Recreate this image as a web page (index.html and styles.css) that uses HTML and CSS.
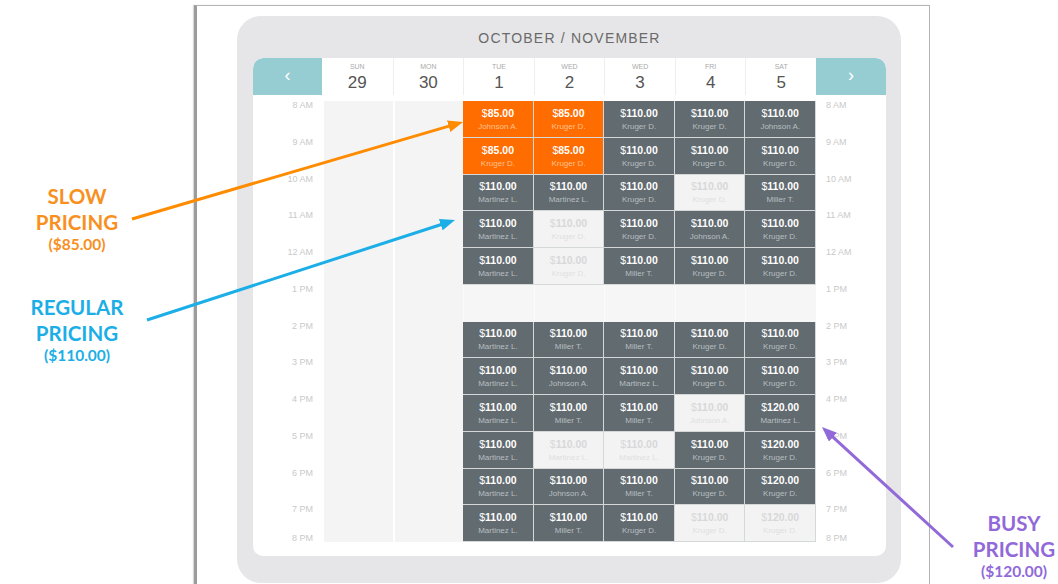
FILE: index.html
```html
<!DOCTYPE html>
<html>
<head>
    <title>Pricing Calendar</title>
    <link rel="stylesheet" href="styles.css">
</head>
<body>
    <div class="device">
        <div class="panel">
            <div class="title">OCTOBER / NOVEMBER</div>
            <div class="card">
                <div class="days">
                    <div class="nav nav-prev">&#8249;</div>
                    <div class="day"><div class="dow">SUN</div><div class="num">29</div></div>
                    <div class="day"><div class="dow">MON</div><div class="num">30</div></div>
                    <div class="day"><div class="dow">TUE</div><div class="num">1</div></div>
                    <div class="day"><div class="dow">WED</div><div class="num">2</div></div>
                    <div class="day"><div class="dow">WED</div><div class="num">3</div></div>
                    <div class="day"><div class="dow">FRI</div><div class="num">4</div></div>
                    <div class="day"><div class="dow">SAT</div><div class="num">5</div></div>
                    <div class="nav nav-next">&#8250;</div>
                </div>

                <div class="grid">
                    <!-- 8 AM -->
                    <div class="time time-l">8 AM</div><div class="off"></div><div class="off"></div>
                    <div class="slot slow"><span class="price">$<b>85.00</b></span><span class="who">Johnson A.</span></div>
                    <div class="slot slow"><span class="price">$<b>85.00</b></span><span class="who">Kruger D.</span></div>
                    <div class="slot"><span class="price">$<b>110.00</b></span><span class="who">Kruger D.</span></div>
                    <div class="slot"><span class="price">$<b>110.00</b></span><span class="who">Kruger D.</span></div>
                    <div class="slot"><span class="price">$<b>110.00</b></span><span class="who">Johnson A.</span></div>
                    <div class="time time-r">8 AM</div>

                    <!-- 9 AM -->
                    <div class="time time-l">9 AM</div><div class="off"></div><div class="off"></div>
                    <div class="slot slow"><span class="price">$<b>85.00</b></span><span class="who">Kruger D.</span></div>
                    <div class="slot slow"><span class="price">$<b>85.00</b></span><span class="who">Kruger D.</span></div>
                    <div class="slot"><span class="price">$<b>110.00</b></span><span class="who">Kruger D.</span></div>
                    <div class="slot"><span class="price">$<b>110.00</b></span><span class="who">Kruger D.</span></div>
                    <div class="slot"><span class="price">$<b>110.00</b></span><span class="who">Kruger D.</span></div>
                    <div class="time time-r">9 AM</div>

                    <!-- 10 AM -->
                    <div class="time time-l">10 AM</div><div class="off"></div><div class="off"></div>
                    <div class="slot"><span class="price">$<b>110.00</b></span><span class="who">Martinez L.</span></div>
                    <div class="slot"><span class="price">$<b>110.00</b></span><span class="who">Martinez L.</span></div>
                    <div class="slot"><span class="price">$<b>110.00</b></span><span class="who">Kruger D.</span></div>
                    <div class="slot free"><span class="price">$<b>110.00</b></span><span class="who">Kruger D.</span></div>
                    <div class="slot"><span class="price">$<b>110.00</b></span><span class="who">Miller T.</span></div>
                    <div class="time time-r">10 AM</div>

                    <!-- 11 AM -->
                    <div class="time time-l">11 AM</div><div class="off"></div><div class="off"></div>
                    <div class="slot"><span class="price">$<b>110.00</b></span><span class="who">Martinez L.</span></div>
                    <div class="slot free"><span class="price">$<b>110.00</b></span><span class="who">Kruger D.</span></div>
                    <div class="slot"><span class="price">$<b>110.00</b></span><span class="who">Kruger D.</span></div>
                    <div class="slot"><span class="price">$<b>110.00</b></span><span class="who">Johnson A.</span></div>
                    <div class="slot"><span class="price">$<b>110.00</b></span><span class="who">Kruger D.</span></div>
                    <div class="time time-r">11 AM</div>

                    <!-- 12 AM -->
                    <div class="time time-l">12 AM</div><div class="off"></div><div class="off"></div>
                    <div class="slot"><span class="price">$<b>110.00</b></span><span class="who">Martinez L.</span></div>
                    <div class="slot free"><span class="price">$<b>110.00</b></span><span class="who">Kruger D.</span></div>
                    <div class="slot"><span class="price">$<b>110.00</b></span><span class="who">Miller T.</span></div>
                    <div class="slot"><span class="price">$<b>110.00</b></span><span class="who">Kruger D.</span></div>
                    <div class="slot"><span class="price">$<b>110.00</b></span><span class="who">Kruger D.</span></div>
                    <div class="time time-r">12 AM</div>

                    <!-- 1 PM, lunch -->
                    <div class="time time-l">1 PM</div><div class="off"></div><div class="off"></div>
                    <div class="gap"></div><div class="gap"></div><div class="gap"></div><div class="gap"></div><div class="gap"></div>
                    <div class="time time-r">1 PM</div>

                    <!-- 2 PM -->
                    <div class="time time-l">2 PM</div><div class="off"></div><div class="off"></div>
                    <div class="slot"><span class="price">$<b>110.00</b></span><span class="who">Martinez L.</span></div>
                    <div class="slot"><span class="price">$<b>110.00</b></span><span class="who">Miller T.</span></div>
                    <div class="slot"><span class="price">$<b>110.00</b></span><span class="who">Miller T.</span></div>
                    <div class="slot"><span class="price">$<b>110.00</b></span><span class="who">Kruger D.</span></div>
                    <div class="slot"><span class="price">$<b>110.00</b></span><span class="who">Kruger D.</span></div>
                    <div class="time time-r">2 PM</div>

                    <!-- 3 PM -->
                    <div class="time time-l">3 PM</div><div class="off"></div><div class="off"></div>
                    <div class="slot"><span class="price">$<b>110.00</b></span><span class="who">Martinez L.</span></div>
                    <div class="slot"><span class="price">$<b>110.00</b></span><span class="who">Johnson A.</span></div>
                    <div class="slot"><span class="price">$<b>110.00</b></span><span class="who">Martinez L.</span></div>
                    <div class="slot"><span class="price">$<b>110.00</b></span><span class="who">Kruger D.</span></div>
                    <div class="slot"><span class="price">$<b>110.00</b></span><span class="who">Kruger D.</span></div>
                    <div class="time time-r">3 PM</div>

                    <!-- 4 PM -->
                    <div class="time time-l">4 PM</div><div class="off"></div><div class="off"></div>
                    <div class="slot"><span class="price">$<b>110.00</b></span><span class="who">Martinez L.</span></div>
                    <div class="slot"><span class="price">$<b>110.00</b></span><span class="who">Miller T.</span></div>
                    <div class="slot"><span class="price">$<b>110.00</b></span><span class="who">Miller T.</span></div>
                    <div class="slot free"><span class="price">$<b>110.00</b></span><span class="who">Johnson A.</span></div>
                    <div class="slot"><span class="price">$<b>120.00</b></span><span class="who">Martinez L.</span></div>
                    <div class="time time-r">4 PM</div>

                    <!-- 5 PM -->
                    <div class="time time-l">5 PM</div><div class="off"></div><div class="off"></div>
                    <div class="slot"><span class="price">$<b>110.00</b></span><span class="who">Martinez L.</span></div>
                    <div class="slot free"><span class="price">$<b>110.00</b></span><span class="who">Martinez L.</span></div>
                    <div class="slot free"><span class="price">$<b>110.00</b></span><span class="who">Martinez L.</span></div>
                    <div class="slot"><span class="price">$<b>110.00</b></span><span class="who">Kruger D.</span></div>
                    <div class="slot"><span class="price">$<b>120.00</b></span><span class="who">Kruger D.</span></div>
                    <div class="time time-r">5 PM</div>

                    <!-- 6 PM -->
                    <div class="time time-l">6 PM</div><div class="off"></div><div class="off"></div>
                    <div class="slot"><span class="price">$<b>110.00</b></span><span class="who">Martinez L.</span></div>
                    <div class="slot"><span class="price">$<b>110.00</b></span><span class="who">Johnson A.</span></div>
                    <div class="slot"><span class="price">$<b>110.00</b></span><span class="who">Miller T.</span></div>
                    <div class="slot"><span class="price">$<b>110.00</b></span><span class="who">Kruger D.</span></div>
                    <div class="slot"><span class="price">$<b>120.00</b></span><span class="who">Kruger D.</span></div>
                    <div class="time time-r">6 PM</div>

                    <!-- 7 PM -->
                    <div class="time time-l">7 PM</div><div class="off"></div><div class="off"></div>
                    <div class="slot"><span class="price">$<b>110.00</b></span><span class="who">Martinez L.</span></div>
                    <div class="slot"><span class="price">$<b>110.00</b></span><span class="who">Miller T.</span></div>
                    <div class="slot"><span class="price">$<b>110.00</b></span><span class="who">Kruger D.</span></div>
                    <div class="slot free"><span class="price">$<b>110.00</b></span><span class="who">Kruger D.</span></div>
                    <div class="slot free"><span class="price">$<b>120.00</b></span><span class="who">Kruger D.</span></div>
                    <div class="time time-r">7 PM</div>

                    <!-- 8 PM -->
                    <div class="time time-l last">8 PM</div>
                    <div class="spacer"></div>
                    <div class="time time-r last">8 PM</div>
                </div>
            </div>
        </div>
    </div>

    <div class="note note-slow">
        <div class="note-head">SLOW<br>PRICING</div>
        <div class="note-price">($85.00)</div>
    </div>
    <div class="note note-regular">
        <div class="note-head">REGULAR<br>PRICING</div>
        <div class="note-price">($110.00)</div>
    </div>
    <div class="note note-busy">
        <div class="note-head">BUSY<br>PRICING</div>
        <div class="note-price">($120.00)</div>
    </div>

    <svg class="arrows" width="1058" height="584" viewBox="0 0 1058 584">
        <defs>
            <marker id="headSlow" markerWidth="5" markerHeight="4" refX="1" refY="2" orient="auto"><path d="M0,0 L5,2 L0,4 z" fill="#ff8b00"/></marker>
            <marker id="headRegular" markerWidth="5" markerHeight="4" refX="1" refY="2" orient="auto"><path d="M0,0 L5,2 L0,4 z" fill="#1caee6"/></marker>
            <marker id="headBusy" markerWidth="5" markerHeight="4" refX="1" refY="2" orient="auto"><path d="M0,0 L5,2 L0,4 z" fill="#9169d9"/></marker>
        </defs>
        <line x1="132" y1="219" x2="451.5" y2="125.4" stroke="#ff8b00" stroke-width="3" marker-end="url(#headSlow)"/>
        <line x1="147" y1="320" x2="443.6" y2="223.7" stroke="#1caee6" stroke-width="3" marker-end="url(#headRegular)"/>
        <line x1="953" y1="547" x2="830.8" y2="435.1" stroke="#9169d9" stroke-width="3" marker-end="url(#headBusy)"/>
    </svg>
</body>
</html>
```

FILE: styles.css
```css
* {
    box-sizing: border-box;
}

body {
    margin: 0;
    height: 584px;
    overflow: hidden;
    position: relative;
    background-color: #fff;
    font-family: "Liberation Sans", Arial, sans-serif;
}

.device {
    margin: 5px 0 0 194px;
    width: 736px;
    height: 579px;
    overflow: hidden;
    padding: 10px 28px 0 40px;
    background-color: #fff;
    border-top: 1px solid #b4b4b4;
    border-right: 1px solid #b4b4b4;
    border-left: 3px solid #9c9c9c;
    box-shadow: -1px 0 1px rgba(0, 0, 0, 0.15);
}

.panel {
    background-color: #e6e6e8;
    border-radius: 24px;
    padding: 0 15px 27px 16px;
}

.title {
    height: 42px;
    line-height: 44px;
    text-align: center;
    font-size: 14px;
    letter-spacing: 1.2px;
    color: #6a6a6a;
}

.card {
    background-color: #fff;
    border-radius: 10px;
    overflow: hidden;
}

.days, .grid {
    display: grid;
    grid-template-columns: 69px repeat(7, 1fr) 70px;
}

.days {
    height: 37px;
}

.nav {
    background-color: #96cdd3;
    color: #fff;
    font-size: 18px;
    display: flex;
    justify-content: center;
    align-items: center;
    padding-bottom: 2px;
}

.nav-prev {
    border-top-left-radius: 10px;
}

.nav-next {
    border-top-right-radius: 10px;
}

.day {
    text-align: center;
    border-left: 1px solid #eee;
    padding-top: 4px;
}

.day:nth-child(2) {
    border-left: none;
}

.dow {
    font-size: 7px;
    line-height: 9px;
    color: #aaa;
}

.num {
    font-size: 17px;
    line-height: 20px;
    margin-top: 2px;
    color: #555;
}

.grid {
    margin-top: 6px;
    grid-template-rows: repeat(12, 36.75px) 14px;
}

.time {
    font-size: 9px;
    line-height: 9px;
    color: #c9c9c9;
}

.time-l {
    text-align: right;
    padding-right: 9px;
}

.time-r {
    padding-left: 10px;
}

.time.last {
    margin-top: -8px;
}

.spacer {
    grid-column: 2 / 9;
}

.off {
    background-color: #f4f4f4;
    border-left: 2px solid #fff;
}

.gap {
    background-color: #f6f6f6;
    border-left: 1px solid #fbfbfb;
}

.slot {
    display: flex;
    flex-direction: column;
    align-items: center;
    justify-content: center;
    background-color: #626b6f;
    border-right: 1px solid #d4d8d9;
    border-bottom: 1px solid #d4d8d9;
    color: #fff;
    padding-top: 1px;
}

.price {
    font-size: 10.5px;
    line-height: 13px;
}

.who {
    font-size: 8px;
    line-height: 11px;
    margin-top: 1px;
    color: #b7bfc2;
}

.slot.slow {
    background-color: #ff6d00;
}

.slot.slow .who {
    color: #ffc08f;
}

.slot.free {
    background-color: #f3f3f4;
    color: #d8d8d8;
}

.slot.free .who {
    color: #e0e0e0;
}

.note {
    position: absolute;
    width: 150px;
    text-align: center;
    font-family: Lato, "Liberation Sans", sans-serif;
    font-weight: bold;
}

.note-head {
    font-size: 20.5px;
    line-height: 26px;
}

.note-price {
    font-size: 15.5px;
    line-height: 18px;
}

.note-slow {
    left: 2px;
    top: 183px;
    color: #f7901e;
}

.note-regular {
    left: 2px;
    top: 294px;
    color: #1caee6;
}

.note-busy {
    left: 939px;
    top: 510px;
    color: #9169d9;
}

.arrows {
    position: absolute;
    left: 0;
    top: 0;
    pointer-events: none;
}
```
